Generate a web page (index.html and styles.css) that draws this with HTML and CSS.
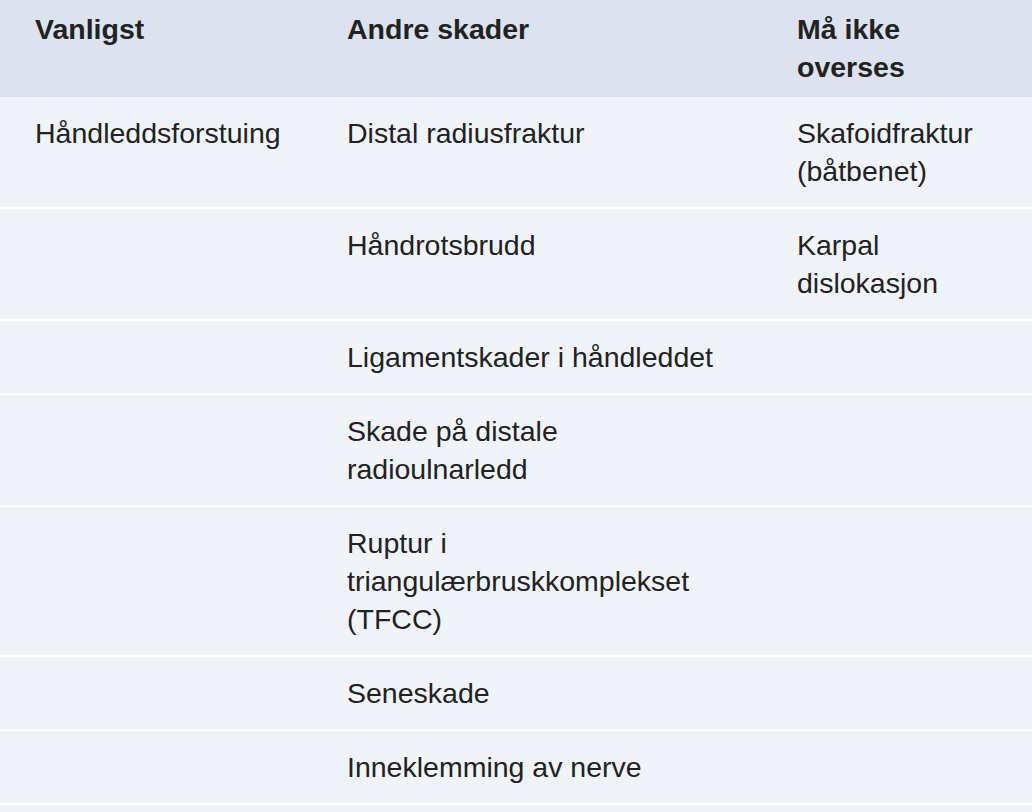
FILE: index.html
```html
<!DOCTYPE html>
<html lang="no">
<head>
<meta charset="utf-8">
<link rel="stylesheet" href="styles.css">
</head>
<body>
<table class="dx">
  <colgroup>
    <col class="c1"><col class="c2"><col class="c3">
  </colgroup>
  <thead>
    <tr><th>Vanligst</th><th>Andre skader</th><th>Må ikke overses</th></tr>
  </thead>
  <tbody>
    <tr><td>Håndleddsforstuing</td><td>Distal radiusfraktur</td><td>Skafoidfraktur (båtbenet)</td></tr>
    <tr><td></td><td>Håndrotsbrudd</td><td>Karpal dislokasjon</td></tr>
    <tr><td></td><td>Ligamentskader i håndleddet</td><td></td></tr>
    <tr><td></td><td>Skade på distale radioulnarledd</td><td></td></tr>
    <tr><td></td><td>Ruptur i triangulærbruskkomplekset (TFCC)</td><td></td></tr>
    <tr><td></td><td>Seneskade</td><td></td></tr>
    <tr><td></td><td>Inneklemming av nerve</td><td></td></tr>
    <tr><td></td><td></td><td></td></tr>
  </tbody>
</table>
</body>
</html>
```
FILE: styles.css
```css
html, body {
  margin: 0;
  padding: 0;
  background: #ffffff;
}
body {
  font-family: "Liberation Sans", Arial, sans-serif;
  color: #222222;
}
.dx {
  width: 1032px;
  table-layout: fixed;
  border-collapse: collapse;
  font-size: 28.5px;
  line-height: 38px;
}
.c1 { width: 312px; }
.c2 { width: 450px; }
.c3 { width: 270px; }
.dx th {
  background: #dce3ee;
  text-align: left;
  font-weight: bold;
  vertical-align: top;
  padding: 10px 30px 11px 35px;
}
.dx td {
  background: #f0f4f9;
  vertical-align: top;
  padding: 17px 30px 17px 35px;
  border-top: 2px solid #ffffff;
}
.dx thead + tbody tr:first-child td {
  border-top: 0;
}
```
